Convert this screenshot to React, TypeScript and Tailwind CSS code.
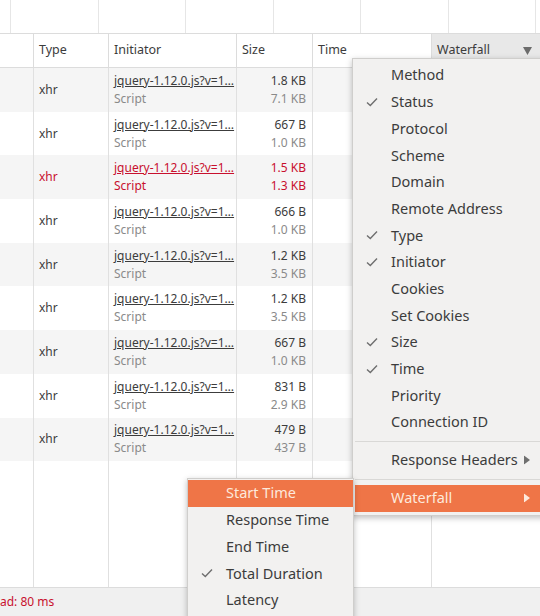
import React from 'react'

type Row = {
  size: string
  resource: string
  error?: boolean
}

const rows: Row[] = [
  { size: '1.8 KB', resource: '7.1 KB' },
  { size: '667 B', resource: '1.0 KB' },
  { size: '1.5 KB', resource: '1.3 KB', error: true },
  { size: '666 B', resource: '1.0 KB' },
  { size: '1.2 KB', resource: '3.5 KB' },
  { size: '1.2 KB', resource: '3.5 KB' },
  { size: '667 B', resource: '1.0 KB' },
  { size: '831 B', resource: '2.9 KB' },
  { size: '479 B', resource: '437 B' },
]

const columns = [
  { key: 'type', label: 'Type', w: 'w-[75px]' },
  { key: 'initiator', label: 'Initiator', w: 'w-[128px]' },
  { key: 'size', label: 'Size', w: 'w-[76px]' },
  { key: 'time', label: 'Time', w: 'w-[119px]' },
]

const menuItems = [
  { label: 'Method' },
  { label: 'Status', checked: true },
  { label: 'Protocol' },
  { label: 'Scheme' },
  { label: 'Domain' },
  { label: 'Remote Address' },
  { label: 'Type', checked: true },
  { label: 'Initiator', checked: true },
  { label: 'Cookies' },
  { label: 'Set Cookies' },
  { label: 'Size', checked: true },
  { label: 'Time', checked: true },
  { label: 'Priority' },
  { label: 'Connection ID' },
]

const subItems = [
  { label: 'Start Time', active: true },
  { label: 'Response Time' },
  { label: 'End Time' },
  { label: 'Total Duration', checked: true },
  { label: 'Latency' },
]

function Check({ left }: { left: string }) {
  return (
    <svg width="12" height="10" viewBox="0 0 12 10" className={`absolute ${left} top-1/2 -translate-y-1/2`}>
      <path d="M1 5.5 L4.3 8.5 L11 1.5" fill="none" stroke="#6f6f6f" strokeWidth="1.4" />
    </svg>
  )
}

function Arrow({ color }: { color: string }) {
  return (
    <svg width="6" height="9" viewBox="0 0 6 9" className="absolute left-[169px] top-1/2 -translate-y-1/2">
      <path d="M0 0 L6 4.5 L0 9 Z" fill={color} />
    </svg>
  )
}

function Separator() {
  return (
    <div className="h-[11px] flex items-center">
      <div className="h-px w-full bg-[#d9d8d6]" />
    </div>
  )
}

export default function App() {
  return (
    <div className="relative w-[540px] h-[616px] overflow-hidden bg-white flex flex-col text-[#3c3c3c] font-['Noto_Sans',sans-serif]">
      {/* overview strip */}
      <div className="h-[34px] flex border-b border-[#dcdcdc] shrink-0">
        <div className="w-[10px] shrink-0" />
        {[0, 1, 2, 3, 4, 5, 6].map(i => (
          <div key={i} className="w-[87.5px] shrink-0 border-l border-[#e6e6e6]" />
        ))}
      </div>

      {/* header */}
      <div className="h-[34px] flex border-b border-[#dcdcdc] text-[12.5px] shrink-0">
        <div className="w-[34px] border-r border-[#dcdcdc]" />
        {columns.map(c => (
          <div key={c.key} className={`${c.w} border-r border-[#dcdcdc] flex items-center pl-[5px]`}>
            {c.label}
          </div>
        ))}
        <div className="flex-1 bg-[#e8e8e8] flex items-center justify-between pl-[5px] pr-[8px]">
          <span>Waterfall</span>
          <svg width="9" height="8" viewBox="0 0 9 8">
            <path d="M0 0 H9 L4.5 8 Z" fill="#6c6c6c" />
          </svg>
        </div>
      </div>

      {/* rows */}
      <div className="flex-1 flex flex-col">
        {rows.map((r, i) => {
          const main = r.error ? 'text-[#c8102e]' : 'text-[#3c3c3c]'
          const sub = r.error ? 'text-[#c8102e]' : 'text-[#8a8a8a]'
          return (
            <div key={i} className={`h-[43.7px] flex text-[12px] ${i % 2 === 0 ? 'bg-[#f5f5f5]' : 'bg-white'}`}>
              <div className="w-[34px] border-r border-[#e0e0e0]" />
              <div className={`w-[75px] border-r border-[#e0e0e0] flex items-center pl-[5px] ${main}`}>xhr</div>
              <div className="w-[128px] border-r border-[#e0e0e0] flex flex-col justify-center pl-[5px] leading-[18px] overflow-hidden">
                <span className={`underline whitespace-nowrap ${main}`}>jquery-1.12.0.js?v=1…</span>
                <span className={sub}>Script</span>
              </div>
              <div className="w-[76px] border-r border-[#e0e0e0] flex flex-col justify-center items-end pr-[6px] leading-[18px]">
                <span className={main}>{r.size}</span>
                <span className={sub}>{r.resource}</span>
              </div>
              <div className="w-[119px] border-r border-[#e0e0e0]" />
              <div className="flex-1" />
            </div>
          )
        })}
        <div className="flex-1 flex">
          <div className="w-[34px] border-r border-[#e0e0e0]" />
          <div className="w-[75px] border-r border-[#e0e0e0]" />
          <div className="w-[128px] border-r border-[#e0e0e0]" />
          <div className="w-[76px] border-r border-[#e0e0e0]" />
          <div className="w-[119px] border-r border-[#e0e0e0]" />
          <div className="flex-1" />
        </div>
      </div>

      {/* status bar */}
      <div className="h-[29px] shrink-0 bg-[#f0f0f0] border-t border-[#dcdcdc] flex items-center text-[12px] text-[#c8102e]">
        ad: 80 ms
      </div>

      {/* column context menu */}
      <div className="absolute left-[352px] top-[58px] w-[200px] bg-[#f2f1f0] border border-[#cfcecc] shadow-[0_2px_6px_rgba(0,0,0,0.25)] pt-[3px] pb-[3px] pl-[2px] text-[14.5px]">
        {menuItems.map(m => (
          <div key={m.label} className="relative h-[26.7px] flex items-center pl-[36px]">
            {m.checked && <Check left="left-[11px]" />}
            {m.label}
          </div>
        ))}
        <Separator />
        <div className="relative h-[27px] flex items-center pl-[36px]">
          Response Headers
          <Arrow color="#6f6f6f" />
        </div>
        <Separator />
        <div className="relative h-[27px] flex items-center pl-[36px] bg-[#ef7547] text-[#fde9dc]">
          Waterfall
          <Arrow color="#fde9dc" />
        </div>
      </div>

      {/* waterfall submenu */}
      <div className="absolute left-[187px] top-[478px] w-[167px] h-[150px] bg-[#f2f1f0] border border-[#cfcecc] shadow-[0_2px_6px_rgba(0,0,0,0.25)] pt-[1px] text-[14.5px]">
        {subItems.map(s => (
          <div
            key={s.label}
            className={`relative h-[26.7px] flex items-center pl-[38px] ${s.active ? 'bg-[#ef7547] text-[#fde9dc]' : ''}`}
          >
            {s.checked && <Check left="left-[13px]" />}
            {s.label}
          </div>
        ))}
      </div>
    </div>
  )
}
